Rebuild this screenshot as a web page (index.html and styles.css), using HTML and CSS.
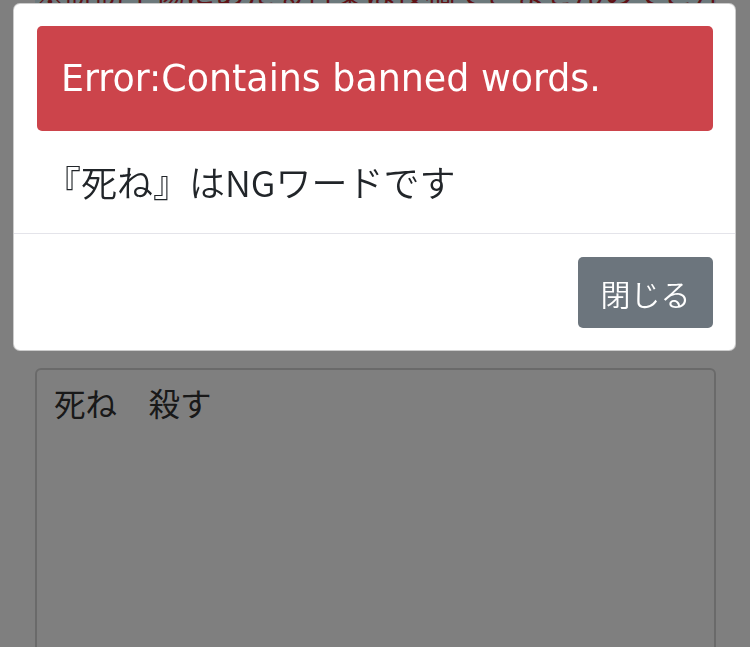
FILE: index.html
```html
<!DOCTYPE html>
<html lang="ja">
<head>
    <meta charset="UTF-8">
    <meta name="viewport" content="width=device-width, initial-scale=1.0">
    <title>NGワード</title>
    <link rel="stylesheet" href="styles.css">
</head>
<body>
    <div id="page">
        <p class="notice">※誹謗中傷にあたる言葉は投稿できませんのでご注意ください</p>
        <textarea class="post-input">死ね　殺す</textarea>
    </div>

    <div class="backdrop"></div>

    <div class="modal">
        <div class="modal-header">
            <div class="alert">Error:Contains banned words.</div>
        </div>
        <div class="modal-body">『死ね』はNGワードです</div>
        <div class="modal-footer">
            <button class="close-button">閉じる</button>
        </div>
    </div>
</body>
</html>
```

FILE: styles.css
```css
body {
    margin: 0;
    padding: 0;
    background-color: #fff;
    font-family: "Noto Sans CJK JP", sans-serif;
    height: 647px;
    overflow: hidden;
}

#page {
    display: flex;
    flex-direction: column;
    padding: 0 34px 0 35px;
}

.notice {
    margin: -24px 0 0 0;
    height: 30px;
    background-color: #d8f2f8;
    color: #c0272d;
    font-size: 30px;
    line-height: 30px;
    white-space: nowrap;
    overflow: hidden;
}

.post-input {
    margin-top: 362px;
    height: 300px;
    padding: 13px 17px;
    border: 2px solid #d4d4d4;
    border-radius: 6px;
    background-color: #fff;
    color: #333;
    font-family: "Noto Sans CJK JP", sans-serif;
    font-size: 31.5px;
    line-height: 38px;
    resize: none;
}

.backdrop {
    position: fixed;
    top: 0;
    left: 0;
    right: 0;
    bottom: 0;
    background-color: rgba(0, 0, 0, 0.5);
}

.modal {
    position: absolute;
    top: 3px;
    left: 13px;
    width: 721px;
    background-color: #fff;
    border: 1px solid rgba(0, 0, 0, 0.2);
    border-radius: 7px;
}

.modal-header {
    padding: 22px 22px 0 23px;
}

.alert {
    height: 105px;
    padding-left: 24px;
    background-color: #cc444b;
    border-radius: 5px;
    color: #fff;
    font-family: "DejaVu Sans", sans-serif;
    font-size: 36.4px;
    line-height: 105px;
    white-space: nowrap;
}

.modal-body {
    padding: 12px 24px 0 31px;
    height: 90px;
    font-size: 36px;
    font-weight: 350;
    line-height: 76px;
    color: #212529;
    white-space: nowrap;
}

.modal-footer {
    display: flex;
    justify-content: flex-end;
    padding: 23px 22px 22px;
    border-top: 1px solid #e4e4ea;
}

.close-button {
    width: 135px;
    height: 71px;
    border: none;
    border-radius: 5px;
    background-color: #6c757d;
    color: #fff;
    font-family: "Noto Sans CJK JP", sans-serif;
    font-size: 30px;
    font-weight: 350;
}
```
